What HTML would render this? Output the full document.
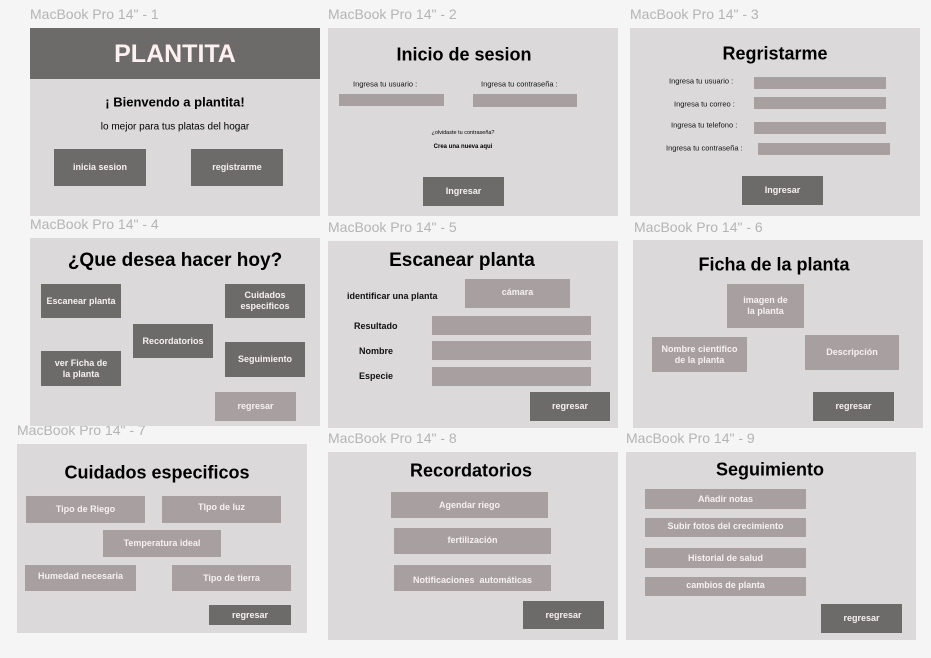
<!DOCTYPE html>
<html><head><meta charset="utf-8"><style>
*{margin:0;padding:0;box-sizing:border-box}
body{width:931px;height:658px;background:#f5f5f5;position:relative;overflow:hidden;font-family:"Liberation Sans","DejaVu Sans",sans-serif}
div{position:absolute}
.f{background:#dbd9da}
.l{color:#b4b4b4;font-size:14px;line-height:16px;white-space:nowrap}
.d,.g{display:flex;align-items:center;justify-content:center;text-align:center;color:#f6f0f0;font-weight:bold;font-size:9px;line-height:11px}
.d{background:#6d6b6a}
.g{background:#a8a0a0}
.t{font-weight:bold;color:#000;text-align:center;white-space:nowrap;transform:translate(-50%,-50%)}
.s{font-size:7.5px;color:#111;white-space:nowrap;transform:translateY(-50%)}
.b{font-size:9px;font-weight:bold;color:#111;white-space:nowrap;transform:translateY(-50%)}
</style></head><body>
<div class="l" style="left:30px;top:6px">MacBook Pro 14" - 1</div>
<div class="l" style="left:328px;top:6px">MacBook Pro 14" - 2</div>
<div class="l" style="left:630px;top:6px">MacBook Pro 14" - 3</div>
<div class="l" style="left:30px;top:216px">MacBook Pro 14" - 4</div>
<div class="l" style="left:328px;top:219px">MacBook Pro 14" - 5</div>
<div class="l" style="left:634px;top:219px">MacBook Pro 14" - 6</div>
<div class="l" style="left:17px;top:422px">MacBook Pro 14" - 7</div>
<div class="l" style="left:328px;top:430px">MacBook Pro 14" - 8</div>
<div class="l" style="left:626px;top:430px">MacBook Pro 14" - 9</div>

<!-- 1 -->
<div class="f" style="left:30px;top:28px;width:290px;height:188px"></div>
<div class="d" style="left:30px;top:28px;width:290px;height:51px;font-size:25px;line-height:28px;color:#fdf0f0">PLANTITA</div>
<div class="t" style="left:175px;top:102px;font-size:13px">¡ Bienvendo a plantita!</div>
<div class="t" style="left:175px;top:127px;font-size:10px;font-weight:normal">lo mejor para tus platas del hogar</div>
<div class="d" style="left:54px;top:149px;width:92px;height:37px">inicia sesion</div>
<div class="d" style="left:191px;top:149px;width:92px;height:37px">registrarme</div>

<!-- 2 -->
<div class="f" style="left:328px;top:28px;width:290px;height:188px"></div>
<div class="t" style="left:464px;top:55px;font-size:18px">Inicio de sesion</div>
<div class="s" style="left:353px;top:84px">Ingresa tu usuario :</div>
<div class="s" style="left:481px;top:84px">Ingresa tu contraseña :</div>
<div class="g" style="left:339px;top:94px;width:105px;height:12px"></div>
<div class="g" style="left:473px;top:94px;width:104px;height:13px"></div>
<div class="t" style="left:463px;top:133px;font-size:5.5px;font-weight:normal">¿olvidaste tu contraseña?</div>
<div class="t" style="left:463px;top:147px;font-size:6px">Crea una nueva aqui</div>
<div class="d" style="left:423px;top:177px;width:81px;height:29px">Ingresar</div>

<!-- 3 -->
<div class="f" style="left:630px;top:28px;width:290px;height:188px"></div>
<div class="t" style="left:775px;top:54px;font-size:18px">Regristarme</div>
<div class="s" style="left:669px;top:81px">Ingresa tu usuario :</div>
<div class="s" style="left:674px;top:104px">Ingresa tu correo :</div>
<div class="s" style="left:671px;top:125px">Ingresa tu telefono :</div>
<div class="s" style="left:666px;top:148px">Ingresa tu contraseña :</div>
<div class="g" style="left:754px;top:77px;width:132px;height:12px"></div>
<div class="g" style="left:754px;top:97px;width:132px;height:12px"></div>
<div class="g" style="left:754px;top:122px;width:132px;height:12px"></div>
<div class="g" style="left:758px;top:143px;width:132px;height:12px"></div>
<div class="d" style="left:742px;top:176px;width:81px;height:29px">Ingresar</div>

<!-- 4 -->
<div class="f" style="left:30px;top:238px;width:290px;height:188px"></div>
<div class="t" style="left:175px;top:261px;font-size:19px">¿Que desea hacer hoy?</div>
<div class="d" style="left:41px;top:284px;width:80px;height:34px">Escanear planta</div>
<div class="d" style="left:225px;top:284px;width:80px;height:34px">Cuidados<br>especificos</div>
<div class="d" style="left:133px;top:324px;width:80px;height:34px">Recordatorios</div>
<div class="d" style="left:225px;top:342px;width:80px;height:35px">Seguimiento</div>
<div class="d" style="left:41px;top:351px;width:80px;height:35px">ver Ficha de<br>la planta</div>
<div class="g" style="left:215px;top:392px;width:81px;height:29px">regresar</div>

<!-- 5 -->
<div class="f" style="left:328px;top:241px;width:290px;height:187px"></div>
<div class="t" style="left:462px;top:261px;font-size:19px">Escanear planta</div>
<div class="b" style="left:347px;top:296px">identificar una planta</div>
<div class="g" style="left:465px;top:279px;width:105px;height:29px;align-items:flex-start;padding-top:8px">cámara</div>
<div class="b" style="left:354px;top:326px">Resultado</div>
<div class="b" style="left:359px;top:351px">Nombre</div>
<div class="b" style="left:359px;top:376px">Especie</div>
<div class="g" style="left:432px;top:316px;width:159px;height:19px"></div>
<div class="g" style="left:432px;top:341px;width:159px;height:19px"></div>
<div class="g" style="left:432px;top:367px;width:159px;height:19px"></div>
<div class="d" style="left:530px;top:392px;width:80px;height:29px">regresar</div>

<!-- 6 -->
<div class="f" style="left:633px;top:240px;width:290px;height:188px"></div>
<div class="t" style="left:774px;top:265px;font-size:18px">Ficha de la planta</div>
<div class="g" style="left:727px;top:284px;width:77px;height:44px">imagen de<br>la planta</div>
<div class="g" style="left:652px;top:337px;width:95px;height:35px">Nombre cientifico<br>de la planta</div>
<div class="g" style="left:805px;top:335px;width:94px;height:35px">Descripción</div>
<div class="d" style="left:813px;top:392px;width:81px;height:29px">regresar</div>

<!-- 7 -->
<div class="f" style="left:17px;top:444px;width:290px;height:189px"></div>
<div class="t" style="left:157px;top:473px;font-size:18px">Cuidados especificos</div>
<div class="g" style="left:26px;top:496px;width:119px;height:27px">Tipo de Riego</div>
<div class="g" style="left:162px;top:496px;width:119px;height:27px;padding-bottom:5px">TIpo de luz</div>
<div class="g" style="left:103px;top:530px;width:118px;height:27px">Temperatura ideal</div>
<div class="g" style="left:25px;top:565px;width:111px;height:26px;padding-bottom:4px">Humedad necesaria</div>
<div class="g" style="left:172px;top:565px;width:119px;height:26px">Tipo de tierra</div>
<div class="d" style="left:209px;top:605px;width:82px;height:20px">regresar</div>

<!-- 8 -->
<div class="f" style="left:328px;top:452px;width:290px;height:188px"></div>
<div class="t" style="left:471px;top:471px;font-size:18px">Recordatorios</div>
<div class="g" style="left:391px;top:492px;width:157px;height:26px">Agendar riego</div>
<div class="g" style="left:394px;top:528px;width:157px;height:26px;padding-bottom:2px">fertilización</div>
<div class="g" style="left:394px;top:565px;width:157px;height:26px;padding-top:4px">Notificaciones&nbsp; automáticas</div>
<div class="d" style="left:523px;top:601px;width:81px;height:28px">regresar</div>

<!-- 9 -->
<div class="f" style="left:626px;top:452px;width:290px;height:188px"></div>
<div class="t" style="left:770px;top:470px;font-size:18px">Seguimiento</div>
<div class="g" style="left:645px;top:489px;width:161px;height:20px">Añadir notas</div>
<div class="g" style="left:645px;top:518px;width:161px;height:19px;padding-bottom:3px">Subir fotos del crecimiento</div>
<div class="g" style="left:645px;top:548px;width:161px;height:20px">Historial de salud</div>
<div class="g" style="left:645px;top:577px;width:161px;height:19px;padding-bottom:3px">cambios de planta</div>
<div class="d" style="left:821px;top:604px;width:81px;height:29px">regresar</div>
</body></html>
